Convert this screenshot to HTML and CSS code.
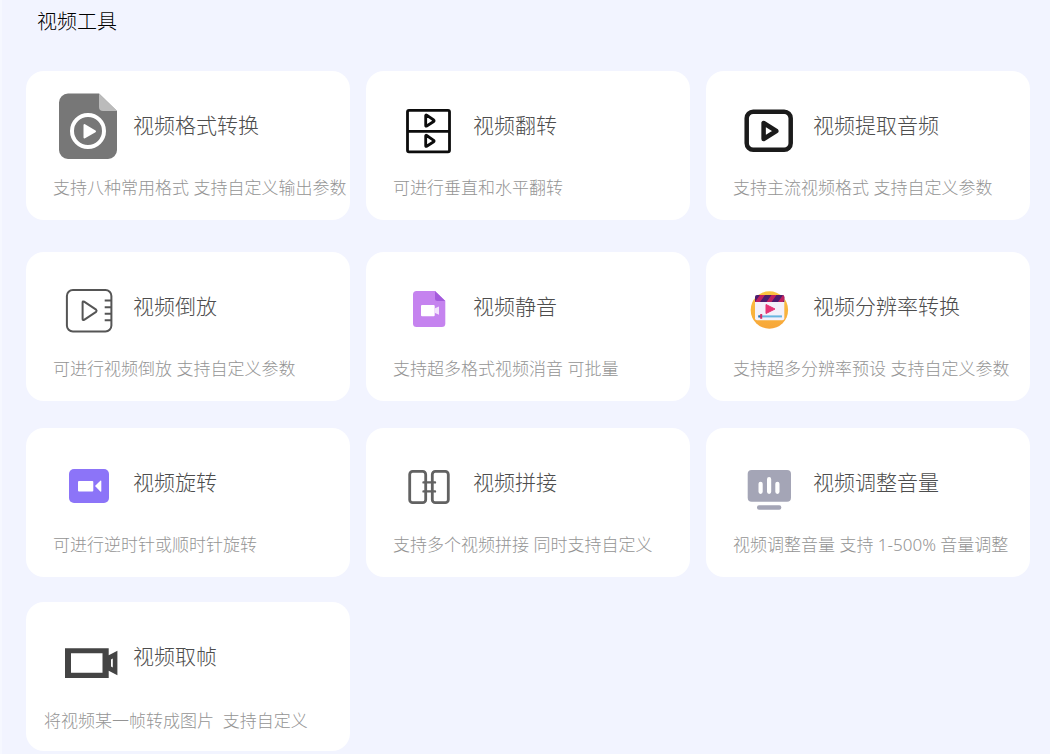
FILE: index.html
```html
<!DOCTYPE html>
<html lang="zh-CN">
<head>
<meta charset="utf-8">
<meta name="viewport" content="width=device-width, initial-scale=1">
<title>视频工具</title>
<link rel="stylesheet" href="styles.css">
</head>
<body>
<main class="page">
  <h1 class="page-title">视频工具</h1>
  <div class="grid">
    <article class="card">
      <div class="card-head">
        <svg class="icon" viewBox="0 0 64 80" aria-hidden="true">
          <path fill="#777" d="M11 6.500H42L60 24V63a9 9 0 0 1-9 9H11a9 9 0 0 1-9-9V15.500a9 9 0 0 1 9-9z"/>
          <path fill="#bbb" d="M42 6.500L60 24H46a4 4 0 0 1-4-4z"/>
          <circle cx="31" cy="44" r="16" fill="none" stroke="#fff" stroke-width="4"/>
          <path fill="#fff" stroke="#fff" stroke-width="2" stroke-linejoin="round" d="M27.500 38V50.500L38 44.300z"/>
        </svg>
        <h2 class="card-title">视频格式转换</h2>
      </div>
      <p class="card-desc">支持八种常用格式 支持自定义输出参数</p>
    </article>
    <article class="card">
      <div class="card-head">
        <svg class="icon" viewBox="0 0 64 80" aria-hidden="true">
          <g fill="none" stroke="#0c0c0c" stroke-width="2.800" stroke-linejoin="round">
            <rect x="10.500" y="23.300" width="42" height="41.500" rx="1.500"/>
            <path d="M10.500 44.300h42M28.700 28.500v10q0 1 1 .5l7-4.500q.8-.8 0-1.500l-7-4.800q-1-.6-1 .3zM28.700 48.800v10q0 1 1 .5l7-4.500q.8-.8 0-1.500l-7-4.800q-1-.6-1 .3z"/>
          </g>
        </svg>
        <h2 class="card-title">视频翻转</h2>
      </div>
      <p class="card-desc">可进行垂直和水平翻转</p>
    </article>
    <article class="card">
      <div class="card-head">
        <svg class="icon" viewBox="0 0 64 80" aria-hidden="true">
          <g fill="none" stroke="#1b1b1b" stroke-width="4.500" stroke-linejoin="round">
            <rect x="9.700" y="24.700" width="44" height="38" rx="6.500"/>
            <path d="M26.600 36v16L39.300 44z"/>
          </g>
        </svg>
        <h2 class="card-title">视频提取音频</h2>
      </div>
      <p class="card-desc">支持主流视频格式 支持自定义参数</p>
    </article>
    <article class="card">
      <div class="card-head">
        <svg class="icon" viewBox="0 0 64 80" aria-hidden="true">
          <g fill="none" stroke="#555" stroke-width="2" stroke-linejoin="round">
            <rect x="9.900" y="22" width="44.500" height="41.500" rx="6"/>
            <path d="M25.600 34.500v16.500q0 1.500 1.500.8l12-8q1-1.100 0-2.100l-12-8q-1.500-.8-1.500.8z"/>
            <path d="M47.700 32.500H54M47.700 39.300H54M47.700 45.700H54M47.700 52.300H54"/>
          </g>
        </svg>
        <h2 class="card-title">视频倒放</h2>
      </div>
      <p class="card-desc">可进行视频倒放 支持自定义参数</p>
    </article>
    <article class="card">
      <div class="card-head">
        <svg class="icon" viewBox="0 0 64 80" aria-hidden="true">
          <path fill="#c583ef" d="M19.500 23H38l10.300 10V55.500a3.500 3.500 0 0 1-3.500 3.500H19.500a3.500 3.500 0 0 1-3.500-3.500V26.500a3.500 3.500 0 0 1 3.500-3.500z"/>
          <path fill="#a45bdc" d="M38 23l10.300 10H40.500a2.500 2.500 0 0 1-2.500-2.500z"/>
          <rect x="24" y="37" width="13.700" height="11.300" rx="1" fill="#fff"/>
          <path fill="#f3e3fd" d="M37.500 40.500L42 38.500V46.700L37.500 44.800z"/>
        </svg>
        <h2 class="card-title">视频静音</h2>
      </div>
      <p class="card-desc">支持超多格式视频消音 可批量</p>
    </article>
    <article class="card">
      <div class="card-head">
        <svg class="icon" viewBox="0 0 64 80" aria-hidden="true">
          <defs>
            <linearGradient id="sun" x1="0" y1="0" x2="0" y2="1">
              <stop offset="0" stop-color="#fbc440"/>
              <stop offset="1" stop-color="#f7a63a"/>
            </linearGradient>
            <clipPath id="clap"><path d="M20 27h25.300a2 2 0 0 1 2 2v5H18v-5a2 2 0 0 1 2-2z"/></clipPath>
          </defs>
          <circle cx="32.400" cy="42" r="18.700" fill="url(#sun)"/>
          <rect x="18" y="27" width="29.300" height="25.300" rx="2" fill="#f3f1fa"/>
          <g clip-path="url(#clap)">
            <path fill="#4c1d6e" d="M18 27h30v7H18z"/>
            <path fill="#c0205f" d="M23 27h5l-5 7h-5zM34.500 27h5l-5 7h-5zM46 27h4l-4 7h-5z"/>
          </g>
          <path fill="#e63375" stroke="#e63375" stroke-linejoin="round" d="M29 36.500v9l9-4.500z"/>
          <path stroke="#68b5e0" stroke-width="2" d="M21.300 48.400H45"/>
          <path stroke="#2a6fb0" stroke-width="2" d="M21.300 48.400H24"/>
          <path stroke="#d52d68" stroke-width="2" d="M24.200 46v4.800"/>
        </svg>
        <h2 class="card-title">视频分辨率转换</h2>
      </div>
      <p class="card-desc">支持超多分辨率预设 支持自定义参数</p>
    </article>
    <article class="card">
      <div class="card-head">
        <svg class="icon" viewBox="0 0 64 80" aria-hidden="true">
          <rect x="12" y="25" width="40" height="34" rx="5" fill="#8c74f8"/>
          <rect x="21" y="37" width="15.300" height="10.400" rx="1" fill="#fff"/>
          <path fill="#fff" d="M38 42l5.300-5.200q1-.8 1 .4v9.800q0 1.200-1 .4z"/>
        </svg>
        <h2 class="card-title">视频旋转</h2>
      </div>
      <p class="card-desc">可进行逆时针或顺时针旋转</p>
    </article>
    <article class="card">
      <div class="card-head">
        <svg class="icon" viewBox="0 0 64 80" aria-hidden="true">
          <g fill="none" stroke="#626262" stroke-width="2.800" stroke-linecap="round">
            <rect x="12.700" y="27.400" width="16" height="31.300" rx="3"/>
            <rect x="35.300" y="27.400" width="16" height="31.300" rx="3"/>
            <path stroke-width="2.400" d="M26.500 38.400H38M26.500 47.400H38"/>
          </g>
        </svg>
        <h2 class="card-title">视频拼接</h2>
      </div>
      <p class="card-desc">支持多个视频拼接 同时支持自定义</p>
    </article>
    <article class="card">
      <div class="card-head">
        <svg class="icon" viewBox="0 0 64 80" aria-hidden="true">
          <rect x="10.700" y="26" width="43.300" height="31.700" rx="4" fill="#a4a5b6"/>
          <rect x="20" y="61.300" width="24.300" height="4.400" rx="2" fill="#a4a5b6"/>
          <path stroke="#fff" stroke-width="4.200" stroke-linecap="round" d="M23.600 39.800V47.800M32.100 35.200V47.800M40.400 39.800V47.800"/>
        </svg>
        <h2 class="card-title">视频调整音量</h2>
      </div>
      <p class="card-desc">视频调整音量 支持 1-500% 音量调整</p>
    </article>
    <article class="card">
      <div class="card-head">
        <svg class="icon" viewBox="0 0 64 80" aria-hidden="true">
          <path fill="#444" fill-rule="evenodd" d="M8 30.300H51.700V37.300L60.400 32.700V57.300L51.700 52.700V60H8zM14 35.200V54.700H45.500V35.200zM54 41.500v7l1.800 1V40.500z"/>
        </svg>
        <h2 class="card-title">视频取帧</h2>
      </div>
      <p class="card-desc card-desc-wide">将视频某一帧转成图片&nbsp; 支持自定义</p>
    </article>
  </div>
</main>
</body>
</html>
```
FILE: styles.css
```css
* {
  box-sizing: border-box;
}

body {
  margin: 0;
  background: #f2f4ff;
  border-left: 2px solid #f6f8ff;
  font-family: "Noto Sans", "Noto Sans CJK SC", sans-serif;
  font-weight: 300;
}

.page {
  padding: 7px 20px 3px 24px;
}

.page-title {
  margin: 0 0 34px;
  padding-left: 11px;
  font-size: 20px;
  line-height: 30px;
  font-weight: 300;
  color: #000;
}

.grid {
  display: grid;
  grid-template-columns: repeat(3, 1fr);
  grid-template-rows: 181px 176px 174px;
  column-gap: 16px;
  align-items: start;
}

.card {
  min-width: 0;
  padding: 16px 0 20px;
  background: #fff;
  border-radius: 18px;
}

.card-head {
  display: flex;
  align-items: center;
  gap: 12px;
  padding-left: 31px;
}

.icon {
  flex: none;
  width: 64px;
  height: 80px;
}

.card-title {
  margin: 0;
  padding-bottom: 4px;
  font-size: 21px;
  line-height: 32px;
  font-weight: 300;
  color: #4d4d4d;
}

.card-desc {
  margin: 9px 0 0;
  padding-left: 27px;
  font-size: 17px;
  line-height: 24px;
  color: #949494;
  white-space: nowrap;
}

.card-desc-wide {
  margin: 11px 0 -2px;
  padding-left: 18px;
}
```
